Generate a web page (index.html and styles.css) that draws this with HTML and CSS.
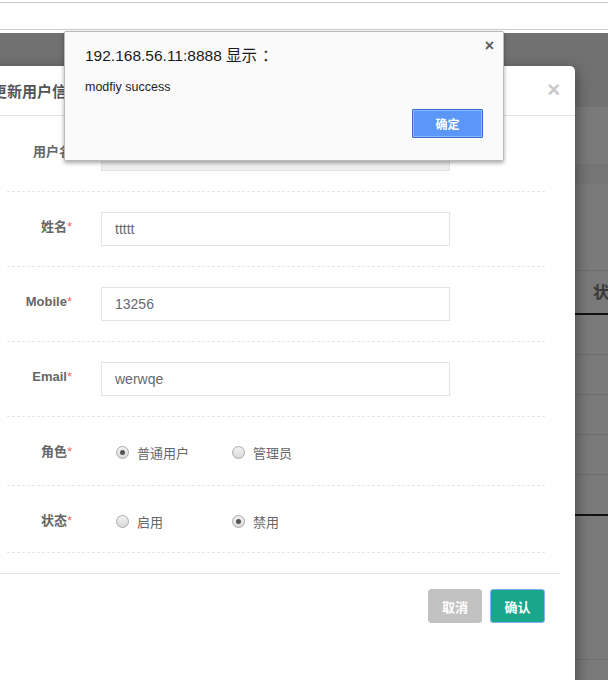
FILE: index.html
```
<!DOCTYPE html>
<html lang="zh-CN">
<head>
<meta charset="utf-8">
<title>更新用户信息</title>
<link rel="stylesheet" href="styles.css">
</head>
<body>
<div class="chrome"><div class="chrome-bar"></div></div>
<div class="page">
  <div class="pg-nav"></div>
  <div class="pg-a"></div>
  <div class="pg-b"></div>
  <div class="pg-c"></div>
  <div class="pg-th"><span>状态</span></div>
  <div class="pg-row"></div>
  <div class="pg-row"></div>
  <div class="pg-row"></div>
  <div class="pg-row"></div>
  <div class="pg-row pg-row-dark"></div>
  <div class="pg-row pg-row-tall"></div>
</div>

<div class="modal">
  <div class="modal-header">
    <h4 class="modal-title">更新用户信息</h4>
    <span class="modal-close">×</span>
  </div>
  <div class="modal-body">
    <div class="form-row">
      <label class="form-label form-label-input">用户名</label>
      <input class="form-input form-input-disabled" type="text" value="" disabled>
    </div>
    <div class="form-row">
      <label class="form-label form-label-input">姓名<em class="req">*</em></label>
      <input class="form-input" type="text" value="ttttt">
    </div>
    <div class="form-row">
      <label class="form-label form-label-input">Mobile<em class="req">*</em></label>
      <input class="form-input" type="text" value="13256">
    </div>
    <div class="form-row">
      <label class="form-label form-label-input">Email<em class="req">*</em></label>
      <input class="form-input" type="text" value="werwqe">
    </div>
    <div class="form-row form-row-radio">
      <label class="form-label">角色<em class="req">*</em></label>
      <div class="radio-group">
        <span class="radio-opt"><span class="radio radio-on"></span>普通用户</span>
        <span class="radio-opt"><span class="radio"></span>管理员</span>
      </div>
    </div>
    <div class="form-row form-row-radio form-row-last">
      <label class="form-label">状态<em class="req">*</em></label>
      <div class="radio-group">
        <span class="radio-opt"><span class="radio"></span>启用</span>
        <span class="radio-opt"><span class="radio radio-on"></span>禁用</span>
      </div>
    </div>
  </div>
  <div class="modal-footer">
    <button class="btn btn-cancel">取消</button>
    <button class="btn btn-ok">确认</button>
  </div>
</div>

<div class="alert">
  <span class="alert-close">×</span>
  <div class="alert-title">192.168.56.11:8888 显示<span class="alert-colon">：</span></div>
  <div class="alert-msg">modfiy success</div>
  <div class="alert-actions"><button class="alert-btn">确定</button></div>
</div>
</body>
</html>
```
FILE: styles.css
```
* { box-sizing: border-box; }
html, body { margin: 0; padding: 0; }
body {
  width: 608px;
  height: 680px;
  overflow: hidden;
  position: relative;
  background: #fff;
  font-family: "Liberation Sans", "Noto Sans CJK SC", sans-serif;
}

/* browser chrome strip */
.chrome { height: 33px; padding-top: 2px; background: #fff; }
.chrome-bar { height: 28px; border-top: 1px solid #c6c6c6; border-bottom: 1px solid #cdcdcd; }

/* page behind the backdrop */
.page { display: flex; flex-direction: column; background: #7a7a7a; height: 647px; }
.pg-nav { height: 74px; background: #717171; }
.pg-a { height: 57px; background: #7a7a7a; }
.pg-b { height: 20px; background: #757575; }
.pg-c { height: 87px; background: #7a7a7a; border-bottom: 1px solid #6e6e6e; }
.pg-th {
  height: 44px;
  border-bottom: 2px solid #111;
  display: flex;
  align-items: center;
  padding-left: 593px;
  padding-bottom: 2px;
  font: bold 16px "Noto Sans CJK SC", sans-serif;
  color: #383838;
  white-space: nowrap;
}
.pg-row { height: 40px; border-bottom: 1px solid #6e6e6e; flex: none; }
.pg-row-dark { border-bottom: 2px solid #111; height: 41px; }
.pg-row-tall { height: 144px; }

/* modal */
.modal {
  position: absolute;
  left: -23px;
  top: 66px;
  width: 598px;
  height: 640px;
  background: #fff;
  border-radius: 5px;
  box-shadow: 0 5px 15px rgba(0,0,0,0.5);
}
.modal-header {
  height: 50px;
  padding: 15px;
  border-bottom: 1px solid #e5e5e5;
  display: flex;
  align-items: center;
  justify-content: space-between;
}
.modal-title {
  margin: 0;
  font: bold 15px/19px "Noto Sans CJK SC", sans-serif;
  color: #555;
}
.modal-close {
  font: bold 22px/19px "Liberation Sans", sans-serif;
  color: #c9c9c9;
  margin-top: -2px;
}
.modal-body { padding: 1px 30px 20px; }
.form-row {
  display: flex;
  align-items: center;
  padding: 20px 0;
  border-bottom: 1px dashed #e6e6e6;
}
.form-row-radio { height: 69px; }
.form-row-last { height: 67px; padding-bottom: 18px; }
.form-label {
  width: 65px;
  margin-right: 29px;
  text-align: right;
  font: bold 13px/15px "Liberation Sans", "Noto Sans CJK SC", sans-serif;
  color: #666;
  white-space: nowrap;
}
.form-label-input { align-self: flex-start; padding-top: 7px; }
.req { font-style: normal; color: #f06a6a; font-weight: normal; }
.form-input {
  width: 349px;
  height: 34px;
  border: 1px solid #e3e3e3;
  padding: 6px 13px;
  font: 14px "Liberation Sans", sans-serif;
  color: #676a6c;
  background: #fff;
  outline: none;
}
.form-input-disabled { background: #eee; }

.radio-group { display: flex; padding-left: 15px; padding-top: 2px; }
.radio-opt {
  width: 116px;
  display: flex;
  align-items: center;
  gap: 8px;
  font: 13px "Noto Sans CJK SC", sans-serif;
  color: #666;
}
.radio {
  width: 13px;
  height: 13px;
  border-radius: 50%;
  border: 1px solid #a9a9a9;
  background: linear-gradient(#f2f2f2, #d9d9d9);
  display: flex;
  align-items: center;
  justify-content: center;
  flex: none;
}
.radio-on::after {
  content: "";
  width: 5px;
  height: 5px;
  border-radius: 50%;
  background: #555;
}

.modal-footer {
  margin: 0 15px;
  border-top: 1px solid #e5e5e5;
  padding: 15px;
  display: flex;
  justify-content: flex-end;
  gap: 8px;
}
.btn {
  height: 34px;
  border-radius: 3px;
  font: bold 13px "Noto Sans CJK SC", sans-serif;
  color: #fff;
  padding: 0;
}
.btn-cancel { width: 54px; background: #c2c2c2; border: 1px solid #c2c2c2; }
.btn-ok { width: 55px; background: #19a68a; border: 1px solid #7fb3f5; }

/* native alert dialog */
.alert {
  position: absolute;
  left: 64px;
  top: 31px;
  width: 440px;
  height: 130px;
  background: #fafafa;
  border: 1px solid #b8b8b8;
  border-radius: 2px;
  box-shadow: 0 2px 4px rgba(0,0,0,0.35);
  padding: 14px 20px 0;
}
.alert-close {
  position: absolute;
  top: 6px;
  right: 9px;
  font: bold 16px/16px "Liberation Sans", sans-serif;
  color: #5a5a5a;
}
.alert-title {
  font: 15.5px/20px "Liberation Sans", "Noto Sans CJK SC", sans-serif;
  color: #1a1a1a;
}
.alert-colon { margin-left: 5px; }
.alert-msg {
  margin-top: 14px;
  font: 12.5px/14px "Liberation Sans", sans-serif;
  color: #222;
}
.alert-actions { display: flex; justify-content: flex-end; margin-top: 15px; }
.alert-btn {
  width: 71px;
  height: 29px;
  background: #5b97f8;
  border: 1px solid #3a6dcf;
  box-shadow: inset 0 0 0 1px #8db7fb;
  color: #fff;
  font: bold 12px "Noto Sans CJK SC", sans-serif;
  border-radius: 1px;
  padding: 0;
}
```
